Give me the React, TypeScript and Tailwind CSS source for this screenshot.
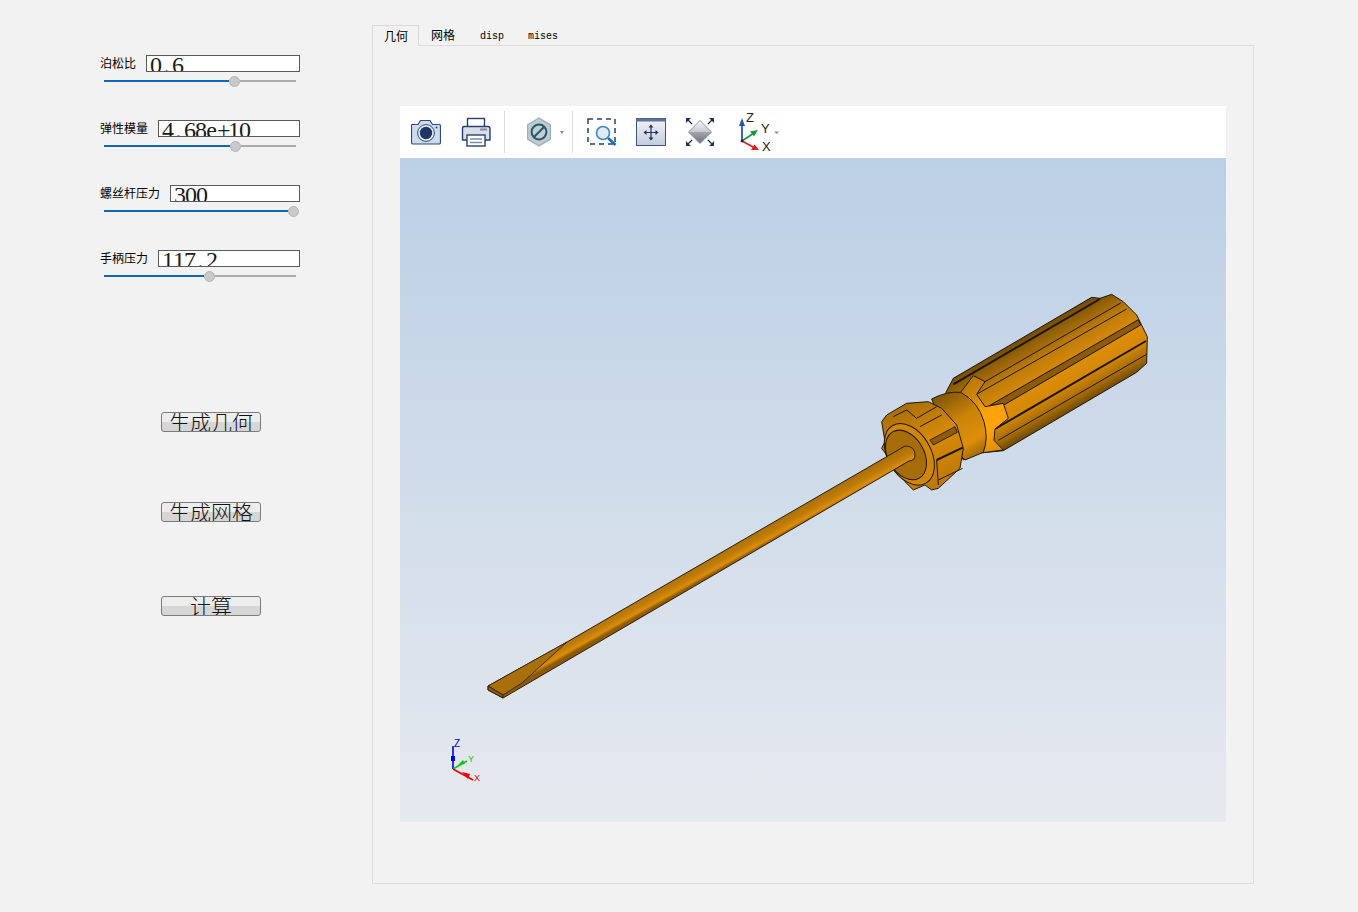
const params = [
  { label: "泊松比", value: "0.6", fill: "w-[125px]" },
  { label: "弹性模量", value: "4.68e+10", fill: "w-[126px]" },
  { label: "螺丝杆压力", value: "300", fill: "w-[184px]" },
  { label: "手柄压力", value: "117.2", fill: "w-[100px]" },
];

function ParamRow({ label, value, fill }: { label: string; value: string; fill: string }) {
  return (
    <div className="flex flex-col gap-[3px]">
      <div className="flex items-start gap-[10px] h-[17px] w-[200px]">
        <span className="text-[12px] leading-[15px] text-black whitespace-nowrap font-['Noto_Sans_CJK_SC',sans-serif]">{label}</span>
        <div className="flex-1 h-[17px] bg-white border border-[#5a5a5a] overflow-hidden pl-[3px] flex font-['Liberation_Serif',serif] text-[24px] leading-[19px] text-[#1a1a1a]">
          {value.split("").map((c, i) => (
            <span key={i} className="inline-block w-[11px] text-center">{c}</span>
          ))}
        </div>
      </div>
      <div className="flex items-center h-[12px] w-[192px] ml-[4px]">
        <div className={`${fill} h-[2px] bg-[#0f67b5] shrink-0`} />
        <div className="w-[11px] h-[11px] rounded-full bg-[#c9c9c9] border border-[#b4b4b4] shrink-0" />
        <div className="flex-1 h-[2px] bg-[#ababab]" />
      </div>
    </div>
  );
}

function ActionButton({ text, className }: { text: string; className: string }) {
  return (
    <button className={`${className} w-[100px] h-[20px] rounded-[3px] border border-[#7b7b7b] bg-[linear-gradient(#ededed_0%,#ededed_50%,#d6d6d6_50%,#d6d6d6_100%)] overflow-hidden flex items-center justify-center pb-[3px] text-[21px] leading-[18px] text-[#111] font-['Noto_Sans_CJK_SC',sans-serif] font-light`}>
      {text}
    </button>
  );
}

function CameraIcon() {
  return (
    <svg viewBox="0 0 30 30" className="w-[30px] h-[30px] shrink-0">
      <path d="M1 7.5 H7 L9.5 3.5 H19 L21.5 7.5 H28 Q29.5 7.5 29.5 9 V25.5 Q29.5 27 28 27 H2 Q0.5 27 0.5 25.5 V9 Q0.5 7.5 1 7.5 Z" fill="#cfdcef" stroke="#2a4a78" strokeWidth="1.2" />
      <circle cx="15" cy="16" r="8.4" fill="#e8eef7" stroke="#2a4a78" strokeWidth="1" />
      <circle cx="15" cy="16" r="6.2" fill="#1f3566" />
      <circle cx="25.5" cy="10.5" r="1" fill="#2a4a78" />
    </svg>
  );
}

function PrinterIcon() {
  return (
    <svg viewBox="0 0 30 30" className="w-[30px] h-[30px] shrink-0">
      <rect x="6.5" y="1.5" width="17" height="9" fill="#fff" stroke="#24406e" strokeWidth="1.4" />
      <path d="M3 9.5 H27 Q29 9.5 29 12 V23 H1.5 V12 Q1.5 9.5 3 9.5 Z" fill="#d9dfe9" stroke="#24406e" strokeWidth="1.4" />
      <rect x="19" y="11.5" width="7" height="2" fill="#7c8aa3" />
      <rect x="6" y="18" width="18" height="11" fill="#fff" stroke="#24406e" strokeWidth="1.4" />
      <path d="M9 22 H21 M9 25.5 H21" stroke="#7c8aa3" strokeWidth="1.4" />
    </svg>
  );
}

function SectionIcon() {
  return (
    <svg viewBox="0 0 24 30" className="w-[24px] h-[30px] shrink-0">
      <path d="M12 1 L23.5 8 V22 L12 29 L0.5 22 V8 Z" fill="#c5c9cb" stroke="#8fb2ba" strokeWidth="1.4" />
      <circle cx="12" cy="15" r="7.4" fill="#c9cccd" stroke="#1d5c70" strokeWidth="2" />
      <path d="M7 20 L17 10" stroke="#1d5c70" strokeWidth="2" />
    </svg>
  );
}

function ZoomBoxIcon() {
  return (
    <svg viewBox="0 0 30 30" className="w-[30px] h-[30px] shrink-0">
      <rect x="1" y="2" width="27" height="25" fill="none" stroke="#24406e" strokeWidth="1.5" strokeDasharray="5 4" />
      <circle cx="16" cy="16" r="6.5" fill="#dfeaf5" stroke="#3b89c2" strokeWidth="1.6" />
      <path d="M21 21 L28.5 28" stroke="#1670ba" strokeWidth="2.6" />
    </svg>
  );
}

function FitIcon() {
  return (
    <svg viewBox="0 0 30 30" className="w-[30px] h-[30px] shrink-0">
      <defs>
        <linearGradient id="fitBody" x1="0" y1="0" x2="0" y2="1">
          <stop offset="0" stopColor="#f2f3f6" />
          <stop offset="1" stopColor="#c4ccdb" />
        </linearGradient>
      </defs>
      <rect x="0.5" y="1.5" width="29" height="27" fill="url(#fitBody)" stroke="#3a5580" />
      <rect x="0.5" y="1.5" width="29" height="3" fill="#5e7398" />
      <path d="M15 9 V22 M9 15.5 H21" stroke="#1d3463" strokeWidth="1.2" />
      <path d="M15 7.5 L12.5 10.5 H17.5 Z M15 23.5 L12.5 20.5 H17.5 Z M7.5 15.5 L10.5 13 V18 Z M22.5 15.5 L19.5 13 V18 Z" fill="#1d3463" />
    </svg>
  );
}

function FitAllIcon() {
  return (
    <svg viewBox="0 0 30 30" className="w-[30px] h-[30px] shrink-0">
      <defs>
        <linearGradient id="diamondTop" x1="0" y1="0" x2="0" y2="1">
          <stop offset="0" stopColor="#f4f5f7" />
          <stop offset="1" stopColor="#c4c8ce" />
        </linearGradient>
        <linearGradient id="diamondBottom" x1="0" y1="0" x2="0" y2="1">
          <stop offset="0" stopColor="#a2a6ae" />
          <stop offset="1" stopColor="#6c7078" />
        </linearGradient>
      </defs>
      <path d="M15 3.5 L26.5 15 H3.5 Z" fill="url(#diamondTop)" />
      <path d="M3.5 15 H26.5 L15 26.5 Z" fill="url(#diamondBottom)" />
      <path d="M15 3.5 L26.5 15 L15 26.5 L3.5 15 Z" fill="none" stroke="#83888f" strokeWidth="0.9" />
      <path d="M2.5 2.5 L7 7 M27.5 2.5 L23 7 M2.5 27.5 L7 23 M27.5 27.5 L23 23" stroke="#1d3463" strokeWidth="1.4" />
      <path d="M1 1 H6 L1 6 Z M29 1 H24 L29 6 Z M1 29 H6 L1 24 Z M29 29 H24 L29 24 Z" fill="#1d3463" />
    </svg>
  );
}

function AxesIcon() {
  return (
    <svg viewBox="0 0 42 40" className="w-[42px] h-[40px] shrink-0">
      <path d="M4 29 V12" stroke="#2458a8" strokeWidth="1.8" />
      <path d="M4 6 L1 14 H7 Z" fill="#2458a8" />
      <path d="M4 29 L16 21" stroke="#1f9440" strokeWidth="1.8" />
      <path d="M20 18 L12 19.5 L16 24.5 Z" fill="#1f9440" />
      <path d="M4 29 L16 35.5" stroke="#e02020" strokeWidth="1.8" />
      <path d="M21 38 L13 38 L16.5 32.5 Z" fill="#e02020" />
      <circle cx="4" cy="29" r="1.4" fill="#1b2436" />
      <text x="8" y="9.5" fontSize="13" fill="#222" fontFamily="Liberation Sans, sans-serif">Z</text>
      <text x="23" y="20.5" fontSize="13" fill="#222" fontFamily="Liberation Sans, sans-serif">Y</text>
      <text x="24" y="38.5" fontSize="13" fill="#222" fontFamily="Liberation Sans, sans-serif">X</text>
      <path d="M36 19.5 H41 L38.5 22 Z" fill="#8a8a8a" />
    </svg>
  );
}

function Screwdriver() {
  return (
    <svg viewBox="400 158 826 664" className="w-[826px] h-[664px] block">
      <defs>
        <linearGradient id="handleBody" gradientUnits="userSpaceOnUse" x1="448" y1="158" x2="585" y2="395">
          <stop offset="0" stopColor="#6e4806" />
          <stop offset="0.12" stopColor="#8f5f08" />
          <stop offset="0.32" stopColor="#bf7c08" />
          <stop offset="0.55" stopColor="#dc8d08" />
          <stop offset="0.72" stopColor="#d48807" />
          <stop offset="0.88" stopColor="#a26a07" />
          <stop offset="1" stopColor="#674404" />
        </linearGradient>
        <linearGradient id="collarBody" gradientUnits="userSpaceOnUse" x1="210" y1="320" x2="320" y2="510">
          <stop offset="0" stopColor="#7a5106" />
          <stop offset="0.45" stopColor="#cb8308" />
          <stop offset="0.8" stopColor="#de8f09" />
          <stop offset="1" stopColor="#a56b06" />
        </linearGradient>
        <linearGradient id="flare" gradientUnits="userSpaceOnUse" x1="290" y1="280" x2="400" y2="500">
          <stop offset="0" stopColor="#b87708" />
          <stop offset="0.25" stopColor="#d08608" />
          <stop offset="0.45" stopColor="#ffa20c" />
          <stop offset="0.7" stopColor="#ffa20c" />
          <stop offset="1" stopColor="#d88a09" />
        </linearGradient>
        <linearGradient id="capBody" gradientUnits="userSpaceOnUse" x1="120" y1="350" x2="240" y2="610">
          <stop offset="0" stopColor="#a86e08" />
          <stop offset="0.45" stopColor="#d88a09" />
          <stop offset="1" stopColor="#b87708" />
        </linearGradient>
        <linearGradient id="shaft" gradientUnits="userSpaceOnUse" x1="736" y1="540" x2="745" y2="556">
          <stop offset="0" stopColor="#a56c08" />
          <stop offset="0.55" stopColor="#c07c08" />
          <stop offset="0.82" stopColor="#dc8c0a" />
          <stop offset="1" stopColor="#8a5a06" />
        </linearGradient>
      </defs>

      <g transform="translate(870 285) scale(0.3333)" stroke="#1e1608" strokeLinejoin="round">
        <path d="M228 322 L250 280 L665 37 L690 40 L725 28 L760 50 L800 90 L832 155 L830 235 L800 262 L400 497 L320 505 L280 525 L200 400 Z" fill="url(#handleBody)" strokeWidth="3" />
        <path d="M250 298 L690 42" fill="none" strokeWidth="6" />
        <path d="M345 290 L752 54 M320 328 L770 72" fill="none" strokeWidth="3" />
        <path d="M358 362 L805 104 L812 120 L405 358 Z" fill="#8c5b08" strokeWidth="3" />
        <path d="M375 432 L828 168" fill="none" strokeWidth="6" />
        <path d="M385 466 L830 208" fill="none" strokeWidth="3" />
        <path d="M272 322 L310 272 L345 290 L320 328 L345 365 L400 355 L415 400 L375 432 L372 466 L400 495 L340 503 L335 400 Z" fill="url(#flare)" strokeWidth="3" />
        <path d="M185 342 Q230 318 272 322 Q325 350 342 410 Q356 460 340 502 L285 525 L240 480 Z" fill="url(#collarBody)" strokeWidth="3" />
        <path d="M35 410 L50 390 L110 355 L175 350 L215 370 L260 420 L280 490 L270 550 L205 610 L185 615 L165 600 L130 615 L105 590 L80 550 L50 510 L35 490 L45 470 Z" fill="url(#capBody)" strokeWidth="3" />
        <path d="M70 395 L110 375 L140 400 L200 365 M150 425 L215 390" fill="none" strokeWidth="3" />
        <path d="M180 465 L255 425 L262 442 L190 480 Z" fill="#8c5b08" strokeWidth="2.5" />
        <path d="M200 525 L278 488" fill="none" strokeWidth="6" />
        <path d="M205 585 L278 550 M200 525 L205 600" fill="none" strokeWidth="3" />
        <ellipse cx="118" cy="508" rx="100" ry="65" transform="rotate(60 118 508)" fill="#d08608" strokeWidth="3" />
        <ellipse cx="108" cy="510" rx="80" ry="54" transform="rotate(60 108 510)" fill="#a56c08" strokeWidth="3" />
      </g>

      <path d="M567 642 L905 446 Q915 446 915 455 Q915 461 909 461 L580 653 L503 698 L488 690 L488 686 Z" fill="url(#shaft)" stroke="#2a1e0c" strokeWidth="1" />
      <path d="M488 686 L567 642 L522 683 L503 695 Z" fill="#a96f0a" stroke="#2a1e0c" strokeWidth="0.8" />
      <path d="M488 686 L503 695 L503 698 L488 690 Z" fill="#8b5a08" stroke="#1e1608" strokeWidth="0.8" />

      <path d="M453 769 V746" stroke="#0000e0" strokeWidth="1.6" />
      <path d="M451 761 H455 V756 H451 Z" fill="#0000e0" />
      <path d="M453 769 L467 761" stroke="#12c412" strokeWidth="1.6" />
      <path d="M458 765 L463 760 L465 764 Z" fill="#12c412" />
      <path d="M453 769 L473 780" stroke="#f00000" strokeWidth="1.6" />
      <path d="M462 772 L468 779 L470 774 Z" fill="#f00000" />
      <text x="454" y="747" fontSize="10" fill="#0000e0" fontFamily="Liberation Sans, sans-serif">Z</text>
      <text x="468" y="762" fontSize="9" fill="#12c412" fontFamily="Liberation Sans, sans-serif">Y</text>
      <text x="474" y="781" fontSize="9" fill="#f00000" fontFamily="Liberation Sans, sans-serif">X</text>
    </svg>
  );
}

export default function App() {
  return (
    <div className="w-[1358px] h-[912px] bg-[#f2f2f2] flex overflow-hidden">
      <div className="w-[372px] shrink-0 pt-[55px] pl-[100px]">
        <div className="flex flex-col gap-[33px]">
          {params.map((p) => (
            <ParamRow key={p.label} {...p} />
          ))}
        </div>
        <ActionButton text="生成几何" className="mt-[130px] ml-[61px]" />
        <ActionButton text="生成网格" className="mt-[70px] ml-[61px]" />
        <ActionButton text="计算" className="mt-[74px] ml-[61px]" />
      </div>

      <div className="w-[882px] shrink-0 pt-[25px]">
        <div className="flex items-end h-[21px] text-[12px] text-black">
          <div className="h-[21px] pl-[11px] pr-[10px] border border-b-0 border-[#d9d9d9] bg-[#f2f2f2] leading-[20px] font-['Noto_Sans_CJK_SC',sans-serif]">几何</div>
          <div className="h-[21px] pl-[12px] pr-[13px] leading-[20px] font-['Noto_Sans_CJK_SC',sans-serif]">网格</div>
          <div className="h-[21px] px-[12px] leading-[24px] text-[10px] font-['Liberation_Mono',monospace]">disp</div>
          <div className="h-[21px] px-[12px] leading-[24px] text-[10px] font-['Liberation_Mono',monospace]">mises</div>
        </div>
        <div className="h-[839px] -mt-px border border-[#dcdcdc] pt-[60px] pl-[27px]">
          <div className="w-[826px] flex flex-col">
            <div className="h-[52px] bg-white flex items-center pl-[11px]">
              <CameraIcon />
              <div className="ml-[20px]"><PrinterIcon /></div>
              <div className="ml-[13px] w-px h-[42px] bg-[#dddddd]" />
              <div className="ml-[22px]"><SectionIcon /></div>
              <div className="ml-[9px] w-0 h-0 border-x-[2.5px] border-x-transparent border-t-[3px] border-t-[#888888]" />
              <div className="ml-[8px] w-px h-[42px] bg-[#dddddd]" />
              <div className="ml-[14px]"><ZoomBoxIcon /></div>
              <div className="ml-[19px]"><FitIcon /></div>
              <div className="ml-[19px]"><FitAllIcon /></div>
              <div className="ml-[23px]"><AxesIcon /></div>
            </div>
            <div className="h-[664px] bg-[linear-gradient(#bbcfe5,#e6e9ef)]">
              <Screwdriver />
            </div>
          </div>
        </div>
      </div>
    </div>
  );
}
